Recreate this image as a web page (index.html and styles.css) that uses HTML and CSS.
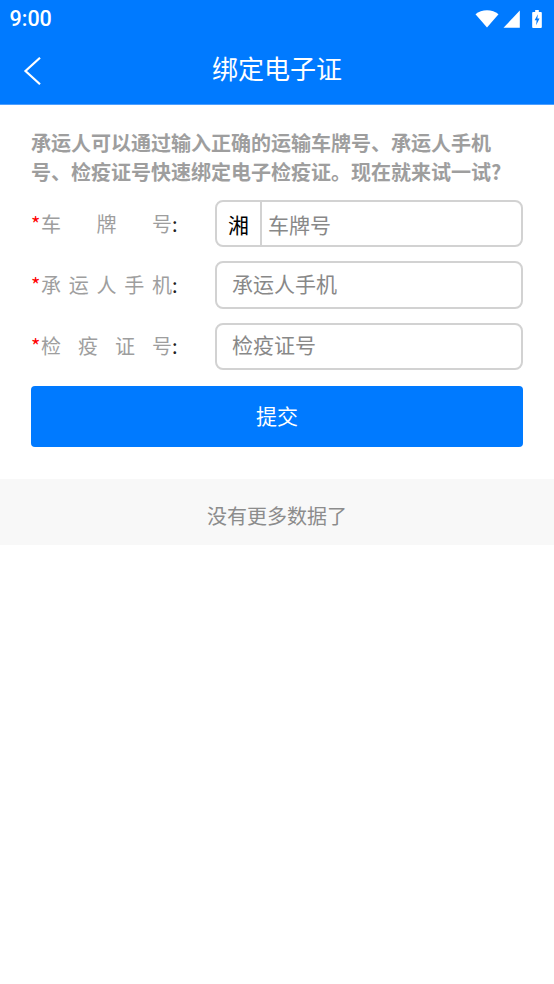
FILE: index.html
```html
<!DOCTYPE html>
<html lang="zh-CN">
<head>
<meta charset="utf-8">
<title>绑定电子证</title>
<link rel="stylesheet" href="styles.css">
</head>
<body>
<header class="header">
  <div class="status">
    <span class="time">9:00</span>
    <div class="status-icons">
      <svg class="wifi" width="24" height="18" viewBox="0 0 24 18"><path fill="#fff" d="M0.500 4.200C3.600 1.700 7.600 0.300 12 0.300s8.400 1.400 11.500 3.900L12 17.500z"/></svg>
      <svg class="signal" width="17" height="18" viewBox="0 0 17 18"><path fill="#fff" d="M0.500 17.800L16.800 0.500V17.800z"/></svg>
      <svg class="battery" width="10" height="20" viewBox="0 0 11 20"><path fill="#fff" d="M3.500 0.200h4v2h2.300a1 1 0 0 1 1 1v15.600a1 1 0 0 1-1 1H1.200a1 1 0 0 1-1-1V3.200a1 1 0 0 1 1-1h2.300z"/><path fill="#007aff" d="M6.500 4.800L2.900 11.400h2.200L4.500 16.800 8.300 9.400H5.900z"/></svg>
    </div>
  </div>
  <div class="nav">
    <svg class="back" width="18" height="28" viewBox="0 0 18 28"><path fill="none" stroke="#fff" stroke-width="2.200" d="M17 0.800L2.500 14 17 27.200"/></svg>
    <h1 class="title">绑定电子证</h1>
  </div>
</header>
<main class="form">
  <p class="intro">承运人可以通过输入正确的运输车牌号、承运人手机号、检疫证号快速绑定电子检疫证。现在就来试一试?</p>
  <div class="row">
    <label class="label"><span class="star">*</span><span class="label-text">车牌号</span><span class="colon">:</span></label>
    <div class="field">
      <span class="prefix">湘</span>
      <span class="placeholder placeholder-plate">车牌号</span>
    </div>
  </div>
  <div class="row">
    <label class="label"><span class="star">*</span><span class="label-text">承运人手机</span><span class="colon">:</span></label>
    <div class="field"><span class="placeholder">承运人手机</span></div>
  </div>
  <div class="row">
    <label class="label"><span class="star">*</span><span class="label-text">检疫证号</span><span class="colon">:</span></label>
    <div class="field"><span class="placeholder">检疫证号</span></div>
  </div>
  <button class="submit" type="button">提交</button>
</main>
<div class="no-more">没有更多数据了</div>
</body>
</html>
```
FILE: styles.css
```css
* { box-sizing: border-box; }
html, body { margin: 0; padding: 0; background: #fff; }
body { font-family: "Noto Sans CJK SC", "Roboto", sans-serif; font-size: 20px; }

.header { height: 105px; background: #007aff; color: #fff; border-bottom: 1px solid #4d9fff; }
.status { height: 36px; display: flex; justify-content: space-between; align-items: center; padding: 1px 12px 0 9.5px; }
.time { font-family: "Roboto", sans-serif; font-size: 21.5px; font-weight: 500; line-height: 36px; }
.status-icons { display: flex; align-items: center; gap: 4px; }
.battery { margin-left: 8px; }

.nav { position: relative; height: 68px; display: flex; align-items: center; justify-content: center; padding-bottom: 4px; }
.back { position: absolute; left: 23px; top: 20.5px; }
.title { margin: 0; font-size: 26px; font-weight: 400; line-height: 64px; }

.form { padding: 23px 31px 32px; }
.intro { margin: 0 0 14px; font-size: 20px; font-weight: 700; line-height: 29px; color: #9e9e9e; }
.row { display: flex; align-items: center; height: 47.400px; margin-bottom: 14px; }
.label { display: flex; width: 184px; line-height: 28px; color: #9e9e9e; }
.star { width: 10px; color: #f00; }
.label-text { width: 131px; text-align: justify; text-align-last: justify; }
.colon { color: #222; width: 7px; }

.field { flex: 1; height: 47.400px; display: flex; align-items: center; border: 2px solid #d2d2d2; border-radius: 8px; font-size: 21px; }
.prefix { width: 45px; height: 100%; display: flex; align-items: center; justify-content: center; border-right: 2px solid #d2d2d2; color: #000; }
.placeholder { padding-left: 15px; color: #888; line-height: 28px; margin-top: -4px; }
.placeholder-plate { padding-left: 6px; margin-top: 0; }

.submit { display: block; width: 100%; height: 61px; margin-top: 15.800px; padding: 0 0 2px; border: 0; border-radius: 4px; background: #007aff; color: #fff; font: inherit; font-size: 21px; }
.no-more { height: 66px; background: #f8f8f8; color: #8c8c8c; text-align: center; line-height: 74px; }
```
